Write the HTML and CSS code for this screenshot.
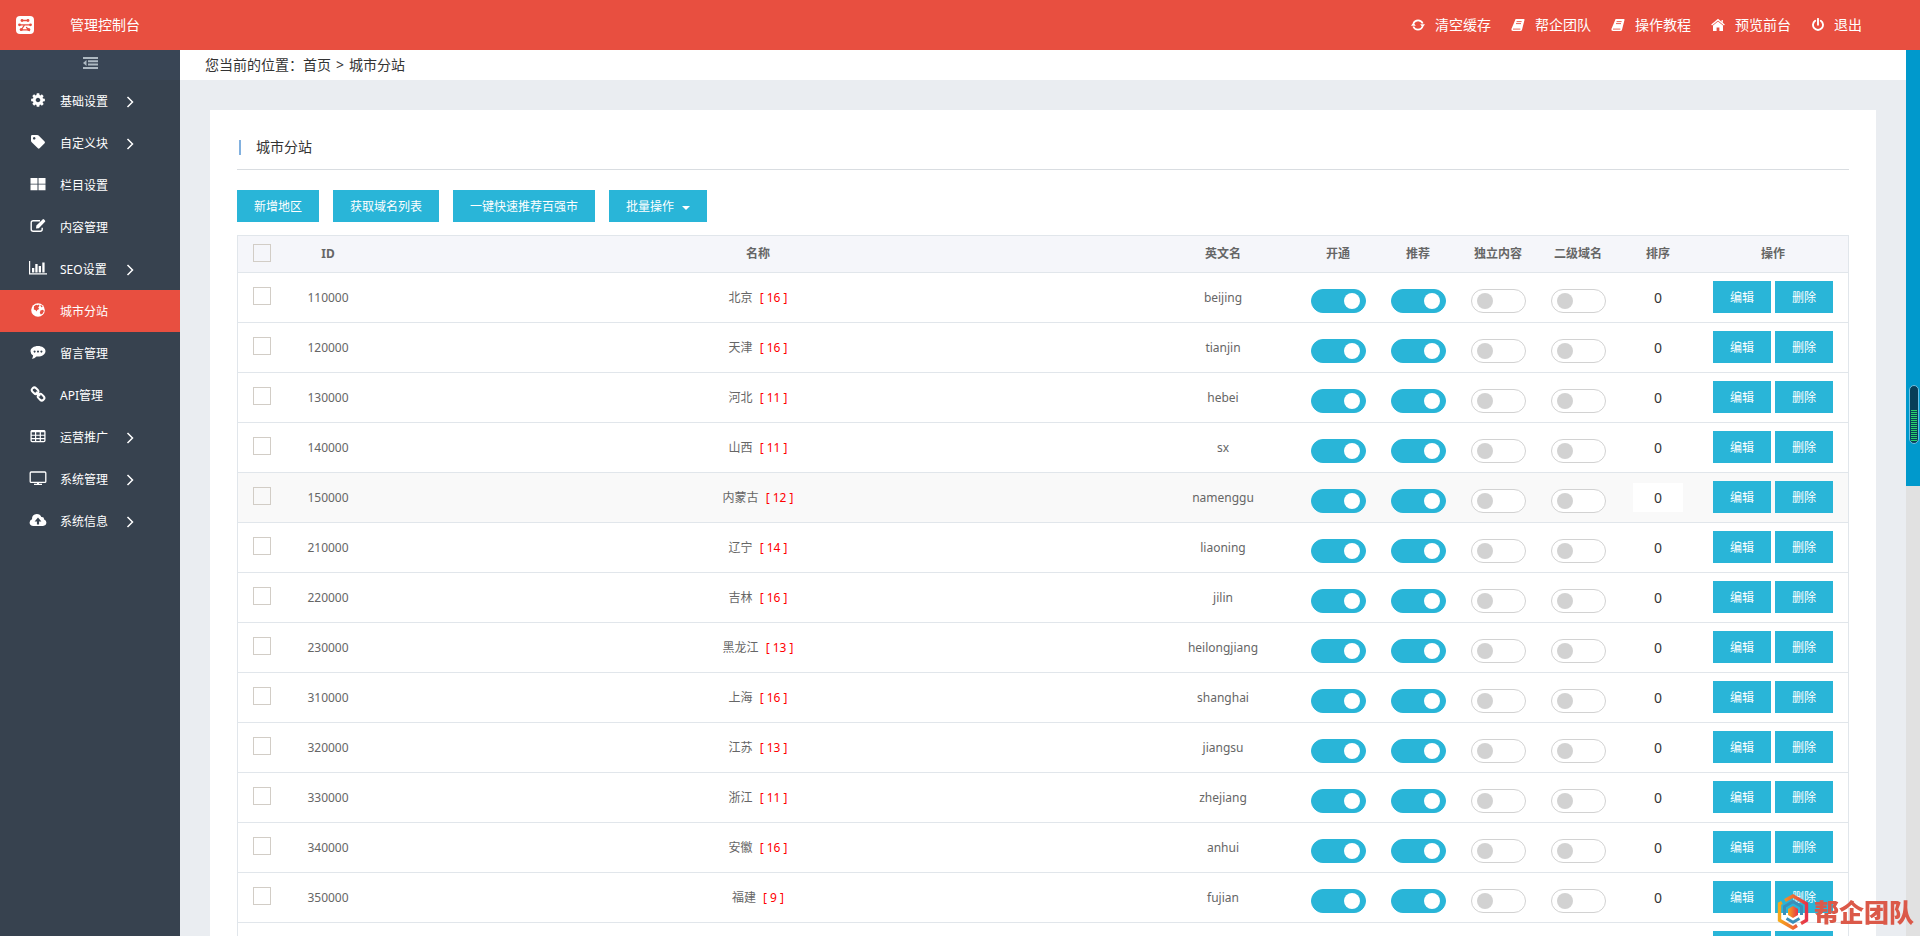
FILE: index.html
```html
<!DOCTYPE html>
<html lang="zh-CN">
<head>
<meta charset="utf-8">
<title>管理控制台 - 城市分站</title>
<link rel="stylesheet" href="styles.css">
</head>
<body>
<header class="topbar">
  <svg class="logo" viewBox="0 0 18 18" aria-hidden="true">
    <rect width="18" height="18" rx="4" fill="#fff"/>
    <g fill="none" stroke="#e84f40" stroke-width="1.3" stroke-linecap="round">
      <path d="M6 4.5h6M3.5 8.8h11M8.5 9l-3 4.5M5 13.8h7M10.500 11.500l3 3"/>
    </g>
    <g fill="#e84f40"><circle cx="6" cy="4.500" r="1.400"/><circle cx="12" cy="4.500" r="1.400"/><circle cx="3.500" cy="8.800" r="1.400"/><circle cx="14.500" cy="8.800" r="1.400"/><circle cx="5.200" cy="13.600" r="1.500"/><circle cx="12.800" cy="13.600" r="1.500"/></g>
  </svg>
  <h1 class="brand">管理控制台</h1>
  <nav class="toplinks">
    <a href="#"><svg class="icon" viewBox="0 0 14 14"><path d="M2.400 5.500A5 5 0 0 1 11.700 5.500M11.600 8.500A5 5 0 0 1 2.300 8.500" fill="none" stroke="currentColor" stroke-width="1.700"/><path d="M0 7.800L2.400 4.600 4.800 7.800zM9.200 6.200h4.800L11.600 9.400z"/></svg>清空缓存</a>
    <a href="#"><svg class="icon" viewBox="0 0 14 14"><use href="#i-book"/></svg>帮企团队</a>
    <a href="#"><svg class="icon" viewBox="0 0 14 14"><use href="#i-book"/></svg>操作教程</a>
    <a href="#"><svg class="icon" viewBox="0 0 14 14"><path d="M7 3.400L12 7.600V13H8.400V9.500H5.600V13H2V7.600z"/><path d="M.6 7.100L7 1.700l6.400 5.400M11.200 2v2.600" fill="none" stroke="currentColor" stroke-width="1.300"/></svg>预览前台</a>
    <a href="#"><svg class="icon" viewBox="0 0 14 14"><path d="M4.200 2.800a5 5 0 1 0 5.600 0M7 .8v6" fill="none" stroke="currentColor" stroke-width="1.900" stroke-linecap="round"/></svg>退出</a>
  </nav>
</header>
<svg class="defs" aria-hidden="true">
  <symbol id="i-book" viewBox="0 0 14 14"><path d="M4.600 1h8.200q1 0 .7 1L11 11.800q-.3 1.200-1.500 1.200H2q-2-.2-1.600-2z"/><path d="M5.600 3.600h5M5 5.600h5M2 11.100h7.400" stroke="#e84f40" stroke-width=".9" fill="none"/></symbol>
  <symbol id="i-arrow" viewBox="0 0 8 12"><path d="M1.500 1l5 5-5 5" fill="none" stroke="currentColor" stroke-width="1.500"/></symbol>
</svg>
<div class="shell">
  <aside class="sidebar">
    <button class="collapse" type="button" aria-label="收起菜单">
      <svg width="15" height="12" viewBox="0 0 15 12" fill="#aeb9c2"><path d="M0 0h15v2H0zM5 3.300h10v2H5zM5 6.600h10v2H5zM0 10h15v2H0zM3.500 3v6L0 6z"/></svg>
    </button>
    <ul class="menu">
      <li><a href="#"><svg class="mi" viewBox="0 0 1792 1792"><path d="M1152 896q0-106-75-181t-181-75-181 75-75 181 75 181 181 75 181-75 75-181zm512-109v222q0 12-8 23t-20 13l-185 28q-19 54-39 91 35 50 107 138 10 12 10 25t-9 23q-27 37-99 108t-94 71q-12 0-26-9l-138-108q-44 23-91 38-16 136-29 186-7 28-36 28h-222q-14 0-24.500-8.500t-11.500-21.500l-28-184q-49-16-90-37l-141 107q-10 9-25 9-14 0-25-11-126-114-165-168-7-10-7-23 0-12 8-23 15-21 51-66.500t54-70.500q-27-50-41-99l-183-27q-13-2-21-12.500t-8-23.500v-222q0-12 8-23t19-13l186-28q14-46 39-92-40-57-107-138-10-12-10-24 0-10 9-23 26-36 98.500-107.500t94.500-71.500q13 0 26 10l138 107q44-23 91-38 16-136 29-186 7-28 36-28h222q14 0 24.500 8.500t11.500 21.500l28 184q49 16 90 37l142-107q9-9 24-9 13 0 25 10 129 119 165 170 7 8 7 22 0 12-8 23-15 21-51 66.500t-54 70.500q26 50 41 98l183 28q13 2 21 12.500t8 23.500z"/></svg><span>基础设置</span><svg class="arrow"><use href="#i-arrow"/></svg></a></li>
      <li><a href="#"><svg class="mi" viewBox="0 0 16 16"><path fill-rule="evenodd" d="M1 2.200Q1 1 2.200 1h5q.8 0 1.400.6l6 6q.8.900 0 1.700l-5 5q-.9.800-1.700 0l-6.200-6Q1 7.600 1 6.800zM4.200 3a1.300 1.300 0 1 0 .01 0z"/></svg><span>自定义块</span><svg class="arrow"><use href="#i-arrow"/></svg></a></li>
      <li><a href="#"><svg class="mi" viewBox="0 0 16 16"><path d="M.5 2h7v5.700h-7zM8.500 2h7v5.700h-7zM.5 8.600h7v5.700h-7zM8.500 8.600h7v5.700h-7z"/></svg><span>栏目设置</span></a></li>
      <li><a href="#"><svg class="mi" viewBox="0 0 16 16"><path d="M10 2.700H3.200Q1.200 2.700 1.200 4.700v6.600q0 2 2 2h7q2 0 2-2V9.800" fill="none" stroke="currentColor" stroke-width="1.400"/><path d="M6 10.600l.4-3L12.600 1.400q.7-.6 1.400 0l1 1q.6.700 0 1.400L8.800 10.200z"/></svg><span>内容管理</span></a></li>
      <li><a href="#"><svg class="mi wide" viewBox="0 0 18 16"><path d="M0 1h1.200v12.300H18v1.200H0zM3 8h2.300v4.500H3zM6.300 4h2.300v8.500H6.300zM9.700 6h2.300v6.500H9.700zM13.300 2.500h2.300v10h-2.300z"/></svg><span>SEO设置</span><svg class="arrow"><use href="#i-arrow"/></svg></a></li>
      <li class="active"><a href="#" aria-current="page"><svg class="mi" viewBox="0 0 16 16"><circle cx="8" cy="8" r="6.800"/><path fill="#e84f40" d="M4 4.200l2.200-1.500 1.400.6 1.500-.7.300 1.500-1.200 1.400 1 1.400-2 1-.5 1.700-1.300-1.500-1.600-.6zM10.500 8.600l2.300-.8 1.200 1.300-1.500 2.600-1.700.8-1-1.800zM10.200 3l1.800.5.600 1.500-1.300.2z"/></svg><span>城市分站</span></a></li>
      <li><a href="#"><svg class="mi" viewBox="0 0 16 16"><path fill-rule="evenodd" d="M8 2c4 0 7.500 2.200 7.500 5.200S12 12.500 8 12.500l-1.500-.1Q4.500 14.600 1.600 14.800q1.400-1.300 1.500-3.400Q.5 9.800.5 7.200C.5 4.200 4 2 8 2zM4.600 6.400a1 1 0 1 0 .01 0zM8 6.400a1 1 0 1 0 .01 0zM11.400 6.400a1 1 0 1 0 .01 0z"/></svg><span>留言管理</span></a></li>
      <li><a href="#"><svg class="mi" viewBox="0 0 16 16"><g fill="none" stroke="currentColor" stroke-width="2"><rect x="1.600" y="2.200" width="7" height="5" rx="2.400" transform="rotate(45 5 4.700)"/><rect x="7.600" y="8.600" width="7" height="5" rx="2.400" transform="rotate(45 11 11.100)"/><path d="M6 6l4 4"/></g></svg><span>API管理</span></a></li>
      <li><a href="#"><svg class="mi" viewBox="0 0 16 16"><rect x="1.100" y="2.600" width="13.800" height="11" rx="1" fill="none" stroke="currentColor" stroke-width="1.300"/><path d="M1 2.500h14v1.700H1zM5 3h1.200v11H5zM9.700 3h1.200v11H9.700zM1 6.700h14v1.100H1zM1 10.100h14v1.100H1z"/></svg><span>运营推广</span><svg class="arrow"><use href="#i-arrow"/></svg></a></li>
      <li><a href="#"><svg class="mi wide" viewBox="0 0 18 16"><rect x="1.200" y="2" width="15.600" height="10.400" rx="1" fill="none" stroke="currentColor" stroke-width="1.300"/><path d="M8 12.500h2v1.300h3V15H5v-1.200h3z"/></svg><span>系统管理</span><svg class="arrow"><use href="#i-arrow"/></svg></a></li>
      <li><a href="#"><svg class="mi wide" viewBox="0 0 18 16"><path fill-rule="evenodd" d="M4.500 14Q.6 13.800.6 10.400.7 8 3 7.200 2.800 2.200 7.800 2q3.500.1 4.500 3 2.700-.4 2.900 2.400 2.200.7 2.200 3.200-.2 3.200-3.400 3.400zM9 5.600L5.600 9.400h2.300v3h2.200v-3h2.300z"/></svg><span>系统信息</span><svg class="arrow"><use href="#i-arrow"/></svg></a></li>
    </ul>
  </aside>
  <main class="main">
    <nav class="crumbs" aria-label="位置"><span>您当前的位置：</span><a href="#">首页</a><span class="sep">&gt;</span><a href="#">城市分站</a></nav>
    <section class="card">
      <h2 class="title">城市分站</h2>
      <div class="tools">
        <button class="btn" type="button">新增地区</button>
        <button class="btn" type="button">获取域名列表</button>
        <button class="btn" type="button">一键快速推荐百强市</button>
        <button class="btn" type="button">批量操作<i class="caret"></i></button>
      </div>
      <table class="grid">
        <colgroup><col class="c-check"><col class="c-small"><col><col class="c-wide"><col class="c-small"><col class="c-small"><col class="c-small"><col class="c-small"><col class="c-small"><col class="c-wide"></colgroup>
        <thead>
          <tr><th class="t-check"><input class="check" type="checkbox" aria-label="全选"></th><th>ID</th><th>名称</th><th>英文名</th><th>开通</th><th>推荐</th><th>独立内容</th><th>二级域名</th><th>排序</th><th>操作</th></tr>
        </thead>
        <tbody id="rows"></tbody>
      </table>
    </section>
  </main>
  <div class="scroll"><div class="thumb"></div></div>
</div>
<div class="meter" aria-hidden="true"><div class="level"></div></div>
<div class="mark">
  <svg width="32" height="36" viewBox="0 0 32 36" aria-hidden="true">
    <defs><linearGradient id="g"><stop offset="0" stop-color="#f7a81b"/><stop offset="1" stop-color="#e5334b"/></linearGradient></defs>
    <g fill="none" stroke-width="3.400">
      <path stroke="url(#g)" d="M8 6.500L16 2l13.500 7.800v16.400L24 29.500M20 31.500l-4 2.500L2.500 26.200V9.800L5 8.400"/>
      <path stroke="#3b8fb8" stroke-width="3" d="M7.500 21v-8.500L16 7.600l8.500 4.900V21M9.500 24.500l6.500 3.700 6.500-3.700"/>
    </g>
    <path fill="url(#g)" d="M16 12l5 3v6l-5 3-5-3v-6z"/>
  </svg>
  <span>帮企团队</span>
</div>
<script src="rows.js"></script>
</body>
</html>
```
FILE: styles.css
```css
* { box-sizing: border-box; }
body {
  margin: 0;
  height: 100vh;
  display: flex;
  flex-direction: column;
  overflow: hidden;
  font: 12px/20px "Noto Sans", "Noto Sans CJK SC", sans-serif;
  color: #666;
  background: #eaedf1;
}
a { color: inherit; text-decoration: none; }
button, input { font: inherit; margin: 0; }
button { cursor: pointer; }
.defs { position: absolute; width: 0; height: 0; }

.topbar {
  flex: none;
  height: 50px;
  display: flex;
  align-items: center;
  padding: 0 58px 0 16px;
  background: #e84f40;
  color: #fff;
  font-size: 14px;
}
.logo { width: 18px; height: 18px; }
.brand { margin: 0 auto 0 36px; font-size: 14px; font-weight: 400; }
.toplinks { display: flex; gap: 20px; }
.toplinks a { display: flex; align-items: center; gap: 9px; }
.toplinks a:not(:last-child) { gap: 10px; }
.icon { width: 14px; height: 14px; fill: currentColor; }

.shell { flex: 1; min-height: 0; display: flex; }
.sidebar { flex: none; width: 180px; background: #37424f; color: #fff; }
.collapse {
  display: flex;
  align-items: center;
  justify-content: center;
  width: 100%;
  height: 30px;
  padding: 0 0 4px;
  border: 0;
  background: #394555;
}
.menu { list-style: none; margin: 0; padding: 0; }
.menu a { display: flex; align-items: center; height: 42px; padding: 0 46px 2px 30px; }
.menu span { margin-left: 14px; flex: 1; padding-top: 3px; }
.mi { width: 16px; height: 16px; fill: currentColor; }
.mi.wide { width: 18px; margin: 0 -1px; }
.arrow { width: 8px; height: 12px; margin-top: 3px; }
.active { background: #e84f40; }

.main { flex: 1; min-width: 0; overflow-y: auto; scrollbar-width: none; }
.crumbs {
  display: flex;
  align-items: center;
  height: 30px;
  padding: 0 25px;
  background: #fff;
  color: #333;
  font-size: 14px;
}
.sep { margin: 0 5px; }
.card { margin: 30px; padding: 16px 27px; background: #fff; }
.title {
  display: flex;
  align-items: center;
  height: 44px;
  margin: 0 0 20px;
  padding: 0 2px 1px;
  border-bottom: 1px solid #d9dde1;
  color: #333;
  font-size: 14px;
  font-weight: 400;
}
.title::before { content: ""; width: 2px; height: 15px; margin-right: 15px; background: #82b1df; }
.tools { display: flex; gap: 14px; margin-bottom: 13px; }
.btn {
  height: 32px;
  padding: 2px 17px 0;
  border: 0;
  background: #29b5d8;
  color: #fff;
  white-space: nowrap;
}
.caret {
  display: inline-block;
  margin-left: 8px;
  vertical-align: middle;
  border: 4px solid transparent;
  border-top-color: #fff;
  border-bottom: 0;
}

.grid {
  width: 100%;
  table-layout: fixed;
  border: 1px solid #e1e6eb;
  border-collapse: separate;
  border-spacing: 0;
  text-align: center;
}
.c-check { width: 50px; }
.c-small { width: 80px; }
.c-wide { width: 150px; }
.grid th, .grid td { padding: 0; border-bottom: 1px solid #e1e6eb; }
.grid th { height: 37px; background: #f5f6fa; font-weight: 700; }
.grid td { height: 50px; }
.grid tbody tr.hover { background: #f9f9f9; }
.grid .t-check, .grid .t-box, .grid .t-switch, .grid .t-sort, .grid .t-act { vertical-align: top; }
.grid .t-check { padding-top: 8px; }
.grid .t-box { padding-top: 14px; }
.grid .t-switch { padding-top: 16px; }
.grid .t-sort { padding-top: 10px; }
.grid .t-act { padding-top: 8px; }
.count { margin-left: 4px; color: #f00; }
.check {
  appearance: none;
  display: block;
  width: 18px;
  height: 18px;
  margin: 0 auto 0 15px;
  border: 1px solid #d2cdc6;
}
.switch {
  appearance: none;
  display: flex;
  align-items: center;
  width: 55px;
  height: 24px;
  margin: 0 auto;
  padding: 0 5px;
  border: 1px solid #d2d2d2;
  border-radius: 12px;
  background: #fff;
}
.switch::before { content: ""; width: 16px; height: 16px; border-radius: 50%; background: #d2d2d2; }
.switch:checked { justify-content: flex-end; border-color: #29b5d8; background: #29b5d8; }
.switch:checked::before { background: #fff; }
.sort {
  display: block;
  width: 50px;
  height: 29px;
  margin: 0 auto;
  padding: 0;
  border: 0;
  background: #fff;
  color: #333;
  font-size: 14px;
  text-align: center;
}
.acts { display: flex; justify-content: center; gap: 4px; }
.acts .btn { width: 58px; }

.scroll { flex: none; width: 14px; background: #e1e1e1; }
.thumb { height: 49.2%; background: #09c; }
.meter {
  position: fixed;
  right: 1px;
  top: 385px;
  width: 10px;
  height: 59px;
  padding: 24px 1px 2px;
  border: 1px solid #6fc0e2;
  border-radius: 5px;
  background: #073e58;
}
.level { height: 31px; background: repeating-linear-gradient(#27d269 0 1px, #073e58 1px 2px); }
.mark {
  position: fixed;
  right: 6px;
  bottom: 6px;
  display: flex;
  align-items: center;
  gap: 5px;
  color: #db5949;
  font-size: 25px;
  font-weight: 900;
  line-height: 36px;
}
```
FILE: rows.js
```js
const cities = [
  [110000, "北京", 16, "beijing"],
  [120000, "天津", 16, "tianjin"],
  [130000, "河北", 11, "hebei"],
  [140000, "山西", 11, "sx"],
  [150000, "内蒙古", 12, "namenggu"],
  [210000, "辽宁", 14, "liaoning"],
  [220000, "吉林", 16, "jilin"],
  [230000, "黑龙江", 13, "heilongjiang"],
  [310000, "上海", 16, "shanghai"],
  [320000, "江苏", 13, "jiangsu"],
  [330000, "浙江", 11, "zhejiang"],
  [340000, "安徽", 16, "anhui"],
  [350000, "福建", 9, "fujian"],
  [360000, "江西", 11, "jiangxi"]
];
const toggle = (name, label, on) =>
  `<td class="t-switch"><input class="switch" type="checkbox" aria-label="${name} ${label}"${on ? " checked" : ""}></td>`;

document.getElementById("rows").innerHTML = cities.map(([id, name, count, slug]) => `
  <tr${id === 150000 ? ' class="hover"' : ""}>
    <td class="t-box"><input class="check" type="checkbox" aria-label="选择 ${name}"></td>
    <td>${id}</td>
    <td>${name} <span class="count">[ ${count} ]</span></td>
    <td>${slug}</td>
    ${toggle(name, "开通", true)}${toggle(name, "推荐", true)}${toggle(name, "独立内容", false)}${toggle(name, "二级域名", false)}
    <td class="t-sort"><input class="sort" type="text" value="0" aria-label="${name} 排序"></td>
    <td class="t-act"><div class="acts"><button class="btn" type="button">编辑</button><button class="btn" type="button">删除</button></div></td>
  </tr>`).join("");
```
